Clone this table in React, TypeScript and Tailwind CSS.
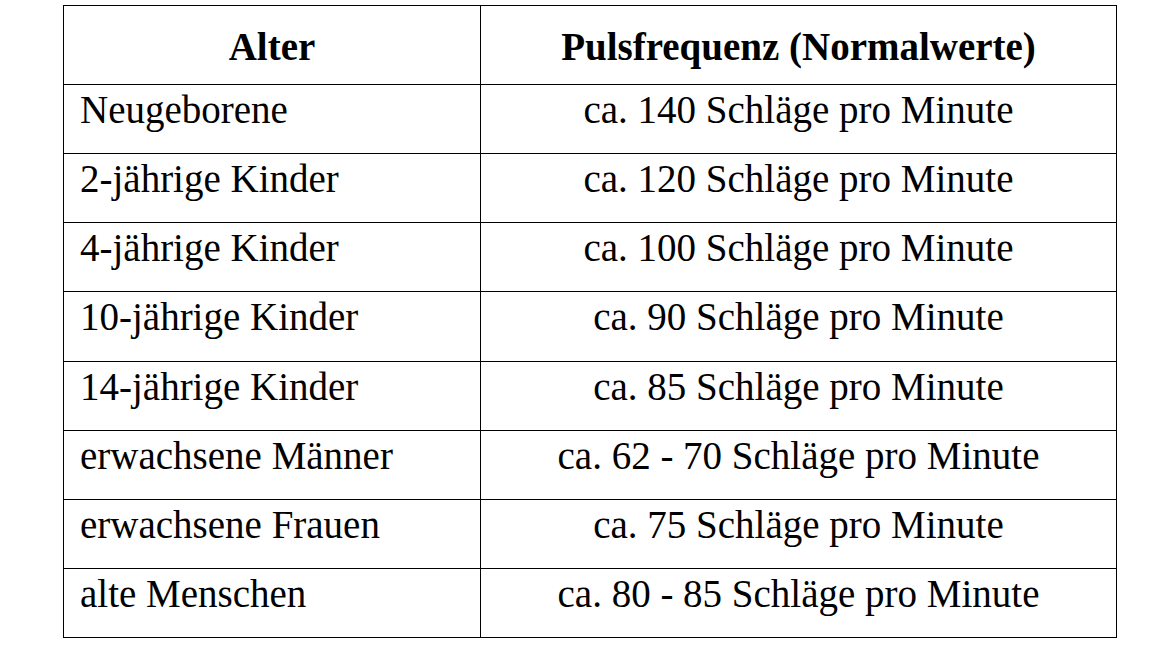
const rows = [
  ["Neugeborene", "ca. 140 Schläge pro Minute"],
  ["2-jährige Kinder", "ca. 120 Schläge pro Minute"],
  ["4-jährige Kinder", "ca. 100 Schläge pro Minute"],
  ["10-jährige Kinder", "ca. 90 Schläge pro Minute"],
  ["14-jährige Kinder", "ca. 85 Schläge pro Minute"],
  ["erwachsene Männer", "ca. 62 - 70 Schläge pro Minute"],
  ["erwachsene Frauen", "ca. 75 Schläge pro Minute"],
  ["alte Menschen", "ca. 80 - 85 Schläge pro Minute"],
];

export default function App() {
  return (
    <div className="w-[1164px] h-[654px] bg-white pt-[5px] pl-[63px] font-['Liberation_Serif','Times_New_Roman',serif] text-black">
      <table className="border-collapse w-[1054px] table-fixed text-[39px] leading-none">
        <thead>
          <tr className="h-[79px]">
            <th className="w-[417px] border border-black text-center align-top pt-[21px] font-bold">Alter</th>
            <th className="border border-black text-center align-top pt-[21px] font-bold">Pulsfrequenz (Normalwerte)</th>
          </tr>
        </thead>
        <tbody>
          {rows.map(([age, pulse]) => (
            <tr key={age} className="h-[69.15px]">
              <td className="border border-black pl-[16px] pt-[5px] align-top text-left font-normal">{age}</td>
              <td className="border border-black pt-[5px] align-top text-center font-normal">{pulse}</td>
            </tr>
          ))}
        </tbody>
      </table>
    </div>
  );
}
